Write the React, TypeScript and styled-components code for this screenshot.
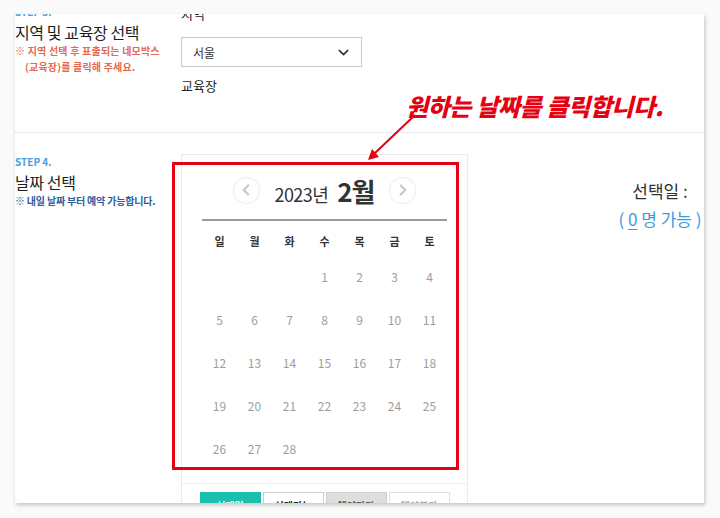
import React from 'react';
import styled, { createGlobalStyle } from 'styled-components';
import { ChevronDown, ChevronLeft, ChevronRight } from 'lucide-react';

const GlobalStyle = createGlobalStyle`
  html, body {
    margin: 0;
    padding: 0;
    background: #fafafa;
    font-family: "Noto Sans CJK KR", "Noto Sans", sans-serif;
    color: #222;
  }
`;

const WEEKDAYS = ['일', '월', '화', '수', '목', '금', '토'];
const LEAD = 3; // Feb 1, 2023 falls on a Wednesday
const DAYS: (number | null)[] = [
  ...Array(LEAD).fill(null),
  ...Array.from({ length: 28 }, (_, i) => i + 1),
];

const LEGEND = [
  { label: '선택일', kind: 'selected' },
  { label: '선택가능', kind: 'available' },
  { label: '예약마감', kind: 'closed' },
  { label: '예약불가', kind: 'disabled' },
] as const;

type LegendKind = (typeof LEGEND)[number]['kind'];

const App: React.FC = () => {
  return (
    <Stage>
      <GlobalStyle />
      <Page>
        <Content>
          <RegionSection>
            <StepColumn>
              <StepLabel>STEP 3.</StepLabel>
              <StepTitle>지역 및 교육장 선택</StepTitle>
              <StepNote $tone="red">
                <span>※ 지역 선택 후 표출되는 네모박스</span>
                <span>(교육장)를 클릭해 주세요.</span>
              </StepNote>
            </StepColumn>
            <FieldColumn>
              <FieldLabel>지역</FieldLabel>
              <SelectBox>
                <span>서울</span>
                <ChevronDown size={17} strokeWidth={2.2} color="#333" />
              </SelectBox>
              <FieldLabel $gap={9}>교육장</FieldLabel>
            </FieldColumn>
          </RegionSection>

          <DateSection>
            <StepColumn>
              <StepLabel>STEP 4.</StepLabel>
              <StepTitle>날짜 선택</StepTitle>
              <StepNote $tone="blue">
                <span>※ 내일 날짜 부터 예약 가능합니다.</span>
              </StepNote>
            </StepColumn>

            <CalendarCard>
              <CalendarBody>
                <MonthHeader>
                  <NavButton aria-label="이전 달">
                    <ChevronLeft size={18} strokeWidth={3} color="#c8c8c8" />
                  </NavButton>
                  <MonthTitle>
                    <YearText>2023년</YearText>
                    <MonthText>2월</MonthText>
                  </MonthTitle>
                  <NavButton aria-label="다음 달">
                    <ChevronRight size={18} strokeWidth={3} color="#c8c8c8" />
                  </NavButton>
                </MonthHeader>
                <HeaderRule />
                <WeekRow>
                  {WEEKDAYS.map((d) => (
                    <WeekCell key={d}>{d}</WeekCell>
                  ))}
                </WeekRow>
                <DayGrid>
                  {DAYS.map((d, i) => (
                    <DayCell key={i}>{d ?? ''}</DayCell>
                  ))}
                </DayGrid>
              </CalendarBody>
              <LegendBar>
                {LEGEND.map((l) => (
                  <LegendChip key={l.kind} $kind={l.kind}>
                    {l.label}
                  </LegendChip>
                ))}
              </LegendBar>
            </CalendarCard>

            <SummaryColumn>
              <SummaryLine>선택일 :</SummaryLine>
              <CountLine>
                ( <u>0</u> 명 가능 )
              </CountLine>
            </SummaryColumn>
          </DateSection>
        </Content>

        <HighlightBox />
        <Arrow width="80" height="70" viewBox="0 0 80 70">
          <line x1="60" y1="11" x2="20" y2="49" stroke="#e60012" strokeWidth="2" />
          <polygon points="13,56 24,53 17,45" fill="#e60012" />
        </Arrow>
        <Callout>원하는 날짜를 클릭합니다.</Callout>
      </Page>
    </Stage>
  );
};

const Stage = styled.div`
  padding: 14px 0 0 15px;
  height: 518px;
  box-sizing: border-box;
  overflow: hidden;
`;

const Page = styled.div`
  position: relative;
  width: 689px;
  height: 489px;
  background: #fff;
  overflow: hidden;
  box-shadow: 1px 2px 4px rgba(0, 0, 0, 0.22);
`;

const Content = styled.div`
  margin-top: -10px;
`;

const RegionSection = styled.section`
  display: grid;
  grid-template-columns: 166px 1fr;
  height: 129px;
  box-sizing: border-box;
  border-bottom: 1px dotted #d8d8d8;
`;

const DateSection = styled.section`
  display: grid;
  grid-template-columns: 166px 287px 384px;
  padding-top: 21px;
`;

const StepColumn = styled.div`
  display: flex;
  flex-direction: column;
`;

const StepLabel = styled.div`
  margin-top: 1px;
  font-size: 10px;
  line-height: 14px;
  font-weight: 700;
  color: #4a9ee0;
`;

const StepTitle = styled.h2`
  margin: 3px 0 0;
  font-size: 16px;
  line-height: 20px;
  font-weight: 400;
  letter-spacing: -0.4px;
  color: #1e1e1e;
`;

const StepNote = styled.p<{ $tone: 'red' | 'blue' }>`
  margin: 1px 0 0;
  display: flex;
  flex-direction: column;
  font-size: 10px;
  line-height: 16px;
  font-weight: 700;
  letter-spacing: ${(p) => (p.$tone === 'red' ? '0.2px' : '-0.2px')};
  color: ${(p) => (p.$tone === 'red' ? '#e5694f' : '#2f5c9c')};

  span + span {
    padding-left: 10px;
  }
`;

const FieldColumn = styled.div`
  display: flex;
  flex-direction: column;
  align-items: flex-start;
`;

const FieldLabel = styled.div<{ $gap?: number }>`
  margin-top: ${(p) => p.$gap ?? 0}px;
  font-size: 13px;
  line-height: 20px;
  color: #222;
`;

const SelectBox = styled.div`
  margin-top: 13px;
  width: 181px;
  height: 30px;
  box-sizing: border-box;
  border: 1px solid #c9c9c9;
  display: flex;
  align-items: center;
  justify-content: space-between;
  padding: 0 9px 0 11px;
  font-size: 12px;
  color: #333;
`;

const CalendarCard = styled.div`
  border: 1px solid #ebebeb;
  border-bottom: none;
  height: 400px;
`;

const CalendarBody = styled.div`
  padding: 20px 20px 13px;
`;

const MonthHeader = styled.div`
  height: 30px;
  display: flex;
  align-items: center;
  justify-content: center;
  gap: 15px;
`;

const NavButton = styled.button`
  width: 27px;
  height: 27px;
  padding: 0;
  border-radius: 50%;
  border: 1px solid #f0f0f0;
  background: #fff;
  display: flex;
  align-items: center;
  justify-content: center;
  box-shadow: 0 0 2px rgba(0, 0, 0, 0.06);
`;

const MonthTitle = styled.div`
  display: flex;
  align-items: baseline;
  gap: 9px;
  color: #333;
`;

const YearText = styled.span`
  font-size: 18px;
  letter-spacing: -0.6px;
`;

const MonthText = styled.span`
  font-size: 26px;
  font-weight: 700;
  letter-spacing: -1px;
`;

const HeaderRule = styled.div`
  margin-top: 14px;
  height: 2px;
  background: #9a9a9a;
`;

const WeekRow = styled.div`
  margin-top: 5px;
  display: grid;
  grid-template-columns: repeat(7, 35px);
`;

const WeekCell = styled.div`
  height: 29px;
  display: flex;
  align-items: center;
  justify-content: center;
  font-size: 11px;
  font-weight: 700;
  color: #333;
`;

const DayGrid = styled.div`
  display: grid;
  grid-template-columns: repeat(7, 35px);
  grid-template-rows: repeat(5, 43px);
`;

const DayCell = styled.div`
  display: flex;
  align-items: center;
  justify-content: center;
  font-size: 12px;
  color: #9d9d9d;
  cursor: pointer;
`;

const LegendBar = styled.div`
  border-top: 1px solid #eeeeee;
  padding-top: 8px;
  display: flex;
  justify-content: center;
  gap: 2px;
`;

const chipStyles: Record<LegendKind, string> = {
  selected: 'background:#1bbfae;color:#fff;border-color:#1bbfae;',
  available: 'background:#fff;color:#222;border-color:#cfcfcf;',
  closed: 'background:#dedede;color:#555;border-color:#d0d0d0;',
  disabled: 'background:#fff;color:#aaa;border-color:#e0e0e0;',
};

const LegendChip = styled.div<{ $kind: LegendKind }>`
  width: 61px;
  height: 26px;
  box-sizing: border-box;
  border: 1px solid;
  display: flex;
  align-items: center;
  justify-content: center;
  font-size: 10px;
  font-weight: 700;
  ${(p) => chipStyles[p.$kind]}
`;

const SummaryColumn = styled.div`
  padding-top: 25px;
  display: flex;
  flex-direction: column;
  align-items: center;
  gap: 4px;
`;

const SummaryLine = styled.div`
  font-size: 17px;
  line-height: 24px;
  color: #333;
`;

const CountLine = styled(SummaryLine)`
  color: #3d9ae0;

  u {
    text-underline-offset: 3px;
  }
`;

const HighlightBox = styled.div`
  position: absolute;
  left: 157px;
  top: 148px;
  width: 287px;
  height: 308px;
  box-sizing: border-box;
  border: 3px solid #e60012;
  pointer-events: none;
`;

const Arrow = styled.svg`
  position: absolute;
  left: 340px;
  top: 90px;
  pointer-events: none;
`;

const Callout = styled.div`
  position: absolute;
  left: 391px;
  top: 78px;
  font-size: 24px;
  line-height: 28px;
  font-weight: 900;
  font-style: italic;
  letter-spacing: -0.4px;
  color: #e60012;
  white-space: nowrap;
`;

export default App;
